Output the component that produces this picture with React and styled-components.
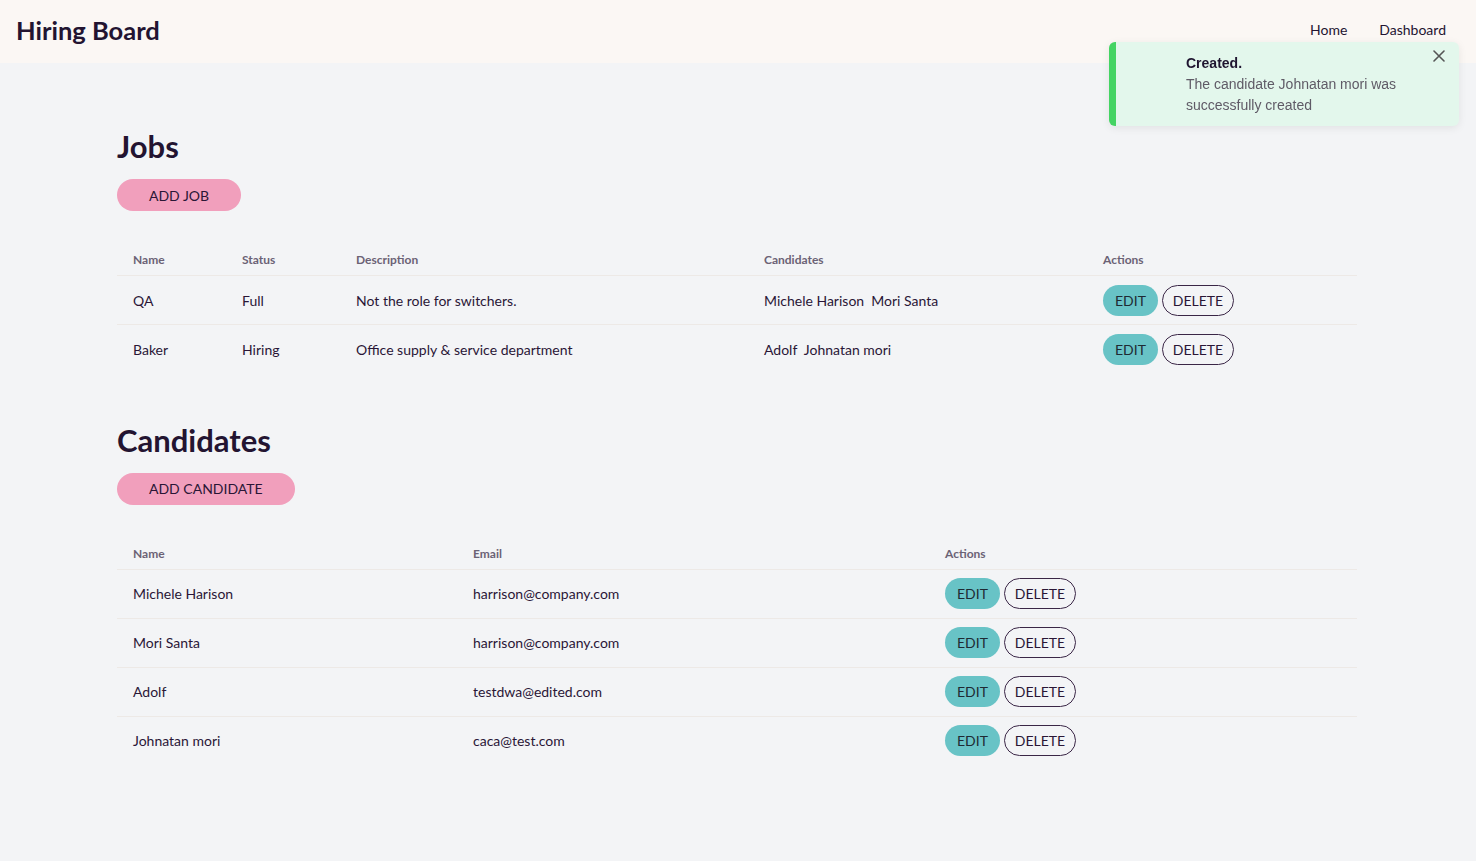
import React from 'react';
import styled, { createGlobalStyle } from 'styled-components';

const GlobalStyle = createGlobalStyle`
  html, body {
    margin: 0;
    padding: 0;
    background-color: #f3f4f6;
    font-family: Lato, "Open Sans", sans-serif;
    color: #2a1636;
  }
  * {
    box-sizing: border-box;
  }
`;

const Header = styled.header`
  height: 63px;
  background-color: #fbf7f4;
  display: flex;
  align-items: center;
  justify-content: space-between;
  padding: 0 30px 4px 16px;
`;

const Logo = styled.div`
  font-size: 25.5px;
  font-weight: bold;
  color: #231431;
`;

const Nav = styled.nav`
  display: flex;
  gap: 32px;
  font-size: 14px;
  color: #231431;
`;

const NavLink = styled.a`
  cursor: pointer;
`;

const Main = styled.main`
  padding: 63px 119px 80px 117px;
`;

const Section = styled.section`
  margin-bottom: 46px;
`;

const Title = styled.h2`
  font-size: 31px;
  font-weight: bold;
  margin: 0 0 13px;
  line-height: 40px;
  color: #231431;
`;

const AddButton = styled.button`
  height: 32px;
  padding: 0 32px;
  border: none;
  border-radius: 16px;
  background-color: #f19fbc;
  color: #2a1636;
  font-family: inherit;
  font-size: 14px;
  cursor: pointer;
`;

const Table = styled.table`
  width: 100%;
  border-collapse: collapse;
  margin-top: 33px;
`;

const Th = styled.th`
  text-align: left;
  font-size: 12px;
  font-weight: bold;
  color: #6b6275;
  padding: 8px 16px 8px;
  border-bottom: 1px solid #ede9e6;
  width: ${(p) => p.$width || 'auto'};
`;

const Td = styled.td`
  font-size: 14px;
  color: #2a1636;
  padding: 0 16px;
  height: 49px;
  border-bottom: ${(p) => (p.$last ? 'none' : '1px solid #ede9e6')};
`;

const Actions = styled.div`
  display: flex;
  gap: 4px;
`;

const EditButton = styled.button`
  height: 31px;
  width: 55px;
  border: none;
  border-radius: 16px;
  background-color: #68c3c6;
  color: #1e2a33;
  font-family: inherit;
  font-size: 14px;
  cursor: pointer;
`;

const DeleteButton = styled.button`
  height: 31px;
  width: 72px;
  border: 1.5px solid #3a2646;
  border-radius: 16px;
  background: transparent;
  color: #2a1636;
  font-family: inherit;
  font-size: 14px;
  cursor: pointer;
`;

const Toast = styled.div`
  position: fixed;
  top: 42px;
  right: 17px;
  width: 350px;
  height: 84px;
  background-color: #e3f7ec;
  border-left: 7px solid #44d463;
  border-radius: 6px;
  box-shadow: 0 2px 8px rgba(0, 0, 0, 0.08);
  padding: 11px 40px 0 70px;
  font-family: "Liberation Sans", Arial, sans-serif;
`;

const ToastTitle = styled.div`
  font-size: 14px;
  font-weight: bold;
  color: #1f1530;
  line-height: 21px;
`;

const ToastText = styled.div`
  font-size: 14px;
  color: #5f5a66;
  line-height: 21px;
`;

const CloseButton = styled.button`
  position: absolute;
  top: 6px;
  right: 12px;
  background: none;
  border: none;
  padding: 0;
  width: 16px;
  height: 16px;
  cursor: pointer;
  display: flex;
  align-items: center;
  justify-content: center;
`;

const jobs = [
  { name: 'QA', status: 'Full', description: 'Not the role for switchers.', candidates: ['Michele Harison', 'Mori Santa'] },
  { name: 'Baker', status: 'Hiring', description: 'Office supply & service department', candidates: ['Adolf', 'Johnatan mori'] },
];

const candidates = [
  { name: 'Michele Harison', email: 'harrison@company.com' },
  { name: 'Mori Santa', email: 'harrison@company.com' },
  { name: 'Adolf', email: 'testdwa@edited.com' },
  { name: 'Johnatan mori', email: 'caca@test.com' },
];

function RowActions() {
  return (
    <Actions>
      <EditButton>EDIT</EditButton>
      <DeleteButton>DELETE</DeleteButton>
    </Actions>
  );
}

export default function App() {
  return (
    <>
      <GlobalStyle />
      <Header>
        <Logo>Hiring Board</Logo>
        <Nav>
          <NavLink>Home</NavLink>
          <NavLink>Dashboard</NavLink>
        </Nav>
      </Header>
      <Main>
        <Section>
          <Title>Jobs</Title>
          <AddButton>ADD JOB</AddButton>
          <Table>
            <thead>
              <tr>
                <Th $width="109px">Name</Th>
                <Th $width="114px">Status</Th>
                <Th $width="408px">Description</Th>
                <Th $width="339px">Candidates</Th>
                <Th>Actions</Th>
              </tr>
            </thead>
            <tbody>
              {jobs.map((job, i) => (
                <tr key={job.name}>
                  <Td $last={i === jobs.length - 1}>{job.name}</Td>
                  <Td $last={i === jobs.length - 1}>{job.status}</Td>
                  <Td $last={i === jobs.length - 1}>{job.description}</Td>
                  <Td $last={i === jobs.length - 1}>{job.candidates.join('\u00a0\u00a0')}</Td>
                  <Td $last={i === jobs.length - 1}>
                    <RowActions />
                  </Td>
                </tr>
              ))}
            </tbody>
          </Table>
        </Section>
        <Section>
          <Title>Candidates</Title>
          <AddButton>ADD CANDIDATE</AddButton>
          <Table>
            <thead>
              <tr>
                <Th $width="340px">Name</Th>
                <Th $width="472px">Email</Th>
                <Th>Actions</Th>
              </tr>
            </thead>
            <tbody>
              {candidates.map((c, i) => (
                <tr key={c.name}>
                  <Td $last={i === candidates.length - 1}>{c.name}</Td>
                  <Td $last={i === candidates.length - 1}>{c.email}</Td>
                  <Td $last={i === candidates.length - 1}>
                    <RowActions />
                  </Td>
                </tr>
              ))}
            </tbody>
          </Table>
        </Section>
      </Main>
      <Toast>
        <ToastTitle>Created.</ToastTitle>
        <ToastText>
          The candidate Johnatan mori was
          <br />
          successfully created
        </ToastText>
        <CloseButton aria-label="close">
          <svg width="12" height="12" viewBox="0 0 12 12">
            <path d="M1 1L11 11M11 1L1 11" stroke="#555" strokeWidth="1.6" strokeLinecap="round" />
          </svg>
        </CloseButton>
      </Toast>
    </>
  );
}
